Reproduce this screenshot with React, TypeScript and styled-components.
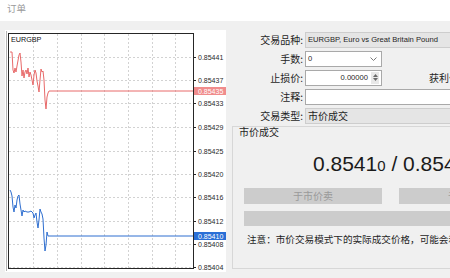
import React from "react";
import styled, { createGlobalStyle } from "styled-components";

const GlobalStyle = createGlobalStyle`
  html, body {
    margin: 0;
    padding: 0;
    background: #f0f0f0;
    overflow: hidden;
  }
  body {
    font-family: "Liberation Sans", "Noto Sans CJK SC", sans-serif;
    color: #1e1e1e;
  }
`;

const cjk = `"Noto Sans CJK SC", "Liberation Sans", sans-serif`;

const Window = styled.div`
  width: 450px;
  height: 278px;
  display: flex;
  flex-direction: column;
  background: #f0f0f0;
  overflow: hidden;
`;

const TitleBar = styled.div`
  height: 21px;
  flex: none;
  background: #ffffff;
  color: #9a9a9a;
  font-family: ${cjk};
  font-size: 9.5px;
  line-height: 17px;
  padding-left: 7px;
  box-sizing: border-box;
`;

const Body = styled.div`
  display: flex;
  padding: 9px 0 0 5px;
  gap: 6px;
  flex: 1;
  min-height: 0;
`;

const ChartPanel = styled.div`
  width: 221px;
  height: 242px;
  flex: none;
  background: #ffffff;
`;

const OrderPanel = styled.div`
  flex: 1;
  min-width: 0;
  display: flex;
  flex-direction: column;
`;

const Form = styled.div`
  display: grid;
  grid-template-columns: 71px 1fr;
  grid-auto-rows: 19px;
  column-gap: 2px;
  align-items: center;
`;

const Label = styled.div`
  font-family: ${cjk};
  font-size: 10px;
  text-align: right;
  color: #1e1e1e;
  white-space: nowrap;
`;

const Field = styled.div<{ $gray?: boolean; $width?: number; $align?: string; $cjk?: boolean }>`
  height: 16px;
  box-sizing: border-box;
  width: ${(p) => (p.$width ? `${p.$width}px` : "calc(100% + 20px)")};
  background: ${(p) => (p.$gray ? "#e5e5e5" : "#ffffff")};
  border: 1px solid ${(p) => (p.$gray ? "#cdcdcd" : "#a9a9a9")};
  font-family: ${(p) => (p.$cjk ? cjk : `"Liberation Sans", sans-serif`)};
  font-size: ${(p) => (p.$cjk ? "10px" : "7.6px")};
  line-height: 14px;
  padding: 0 2px;
  display: flex;
  align-items: center;
  justify-content: ${(p) => p.$align || "flex-start"};
  white-space: nowrap;
  overflow: hidden;
  flex: none;
`;

const FieldRow = styled.div`
  display: flex;
  align-items: center;
`;

const SideLabel = styled(Label)`
  margin-left: 47px;
  text-align: left;
`;

const Chevron = styled.span`
  margin-left: auto;
  margin-right: 2px;
  display: flex;
`;

const Spin = styled.span`
  margin-left: 3px;
  width: 8px;
  height: 12px;
  display: flex;
  flex-direction: column;
  justify-content: center;
  align-items: center;
  gap: 1px;
  background: #e8e8e8;
`;

const GroupBox = styled.div`
  margin-top: 1px;
  height: 143px;
  border: 1px solid #d7d7d7;
  border-right: none;
  box-sizing: border-box;
  margin-right: -20px;
  display: flex;
  flex-direction: column;
`;

const GroupTitle = styled.div`
  font-family: ${cjk};
  font-size: 10px;
  line-height: 10px;
  padding: 0 0 0 6px;
  color: #1e1e1e;
`;

const Price = styled.div`
  font-family: "Liberation Sans", sans-serif;
  font-size: 21px;
  color: #1a1a1a;
  margin: 15px 0 0 80px;
  white-space: nowrap;
  line-height: 24px;
`;

const Small = styled.span`
  font-size: 15px;
`;

const Buttons = styled.div`
  display: flex;
  gap: 17px;
  padding-left: 11px;
  margin-top: 10px;
`;

const Button = styled.div<{ $width: number }>`
  width: ${(p) => p.$width}px;
  height: 16px;
  flex: none;
  background: #cccccc;
  color: #9a9a9a;
  font-family: ${cjk};
  font-size: 10px;
  line-height: 16px;
  text-align: center;
`;

const Bar = styled.div`
  margin: 7px 0 0 11px;
  height: 15px;
  background: #cccccc;
`;

const Note = styled.div`
  margin: 7px 0 0 14px;
  font-family: ${cjk};
  font-size: 9.6px;
  line-height: 12px;
  color: #1e1e1e;
  white-space: nowrap;
`;

const red = [
  [10, 52], [12, 52], [13, 70], [14, 73], [15, 68], [16, 72], [17, 66], [19, 55], [20, 53],
  [21, 62], [22, 76], [23, 70], [24, 78], [25, 72], [26, 70], [27, 74], [28, 68], [29, 77],
  [30, 72], [31, 75], [32, 80], [33, 85], [34, 75], [35, 70], [36, 73], [37, 81], [38, 86],
  [39, 92], [40, 80], [41, 69], [42, 72], [43, 71], [44, 80], [45, 100], [46, 109], [47, 97],
  [48, 93], [49, 91], [193, 91],
];

const blue = [
  [10, 190], [11, 192], [12, 196], [13, 207], [14, 212], [15, 205], [16, 208], [17, 200],
  [18, 196], [19, 195], [20, 204], [21, 210], [22, 216], [23, 210], [24, 212], [25, 211],
  [27, 212], [29, 212], [31, 211], [33, 213], [34, 218], [35, 215], [36, 213], [37, 222],
  [38, 228], [39, 220], [40, 209], [41, 212], [42, 214], [43, 219], [44, 238], [45, 251],
  [46, 245], [47, 232], [48, 236], [49, 236], [193, 236],
];

const gridX = [33, 57, 81, 104, 128, 152, 175];
const levels: [string, number][] = [
  ["0.85441", 57], ["0.85437", 80], ["0.85433", 103], ["0.85429", 127], ["0.85425", 151],
  ["0.85420", 174], ["0.85416", 197], ["0.85412", 221], ["0.85408", 244], ["0.85404", 267],
];

const toPoints = (pts: number[][]) => pts.map(([x, y]) => `${x},${y}`).join(" ");

const Chart = () => (
  <svg width="221" height="242" viewBox="5 30 221 242" style={{ display: "block" }}>
    <g stroke="#d2d2d2" strokeWidth="1" strokeDasharray="2 2">
      {gridX.map((x) => (
        <line key={x} x1={x + 0.5} y1={34} x2={x + 0.5} y2={268} />
      ))}
      {levels.map(([, y]) => (
        <line key={y} x1={9} y1={y + 0.5} x2={193} y2={y + 0.5} />
      ))}
    </g>
    <line x1="6.5" y1="31" x2="6.5" y2="271" stroke="#b4b4b4" />
    <rect x="8.5" y="33.5" width="185" height="235" fill="none" stroke="#262626" />
    <text x="11" y="42" fontSize="7.2" fontFamily="Liberation Sans" fill="#111">EURGBP</text>
    <polyline points={toPoints(red)} fill="none" stroke="#e86a6a" strokeWidth="1" />
    <polyline points={toPoints(blue)} fill="none" stroke="#2f6fd0" strokeWidth="1" />
    <g fontSize="7" fontFamily="Liberation Sans" fill="#2a2a2a">
      {levels.map(([t, y]) => (
        <g key={t}>
          <line x1="193" y1={y + 0.5} x2="196" y2={y + 0.5} stroke="#262626" />
          <text x="198" y={y + 2.5}>{t}</text>
        </g>
      ))}
    </g>
    <rect x="194" y="87" width="32" height="8" fill="#f08c8c" />
    <text x="198" y="93.5" fontSize="7" fontFamily="Liberation Sans" fill="#ffffff">0.85435</text>
    <rect x="194" y="232" width="32" height="8" fill="#2a6fd6" />
    <text x="198" y="238.5" fontSize="7" fontFamily="Liberation Sans" fill="#ffffff">0.85410</text>
  </svg>
);

export default function App() {
  return (
    <Window>
      <GlobalStyle />
      <TitleBar>订单</TitleBar>
      <Body>
        <ChartPanel>
          <Chart />
        </ChartPanel>
        <OrderPanel>
          <Form>
            <Label>交易品种:</Label>
            <Field $gray>EURGBP, Euro vs Great Britain Pound</Field>
            <Label>手数:</Label>
            <Field $width={77}>
              0
              <Chevron>
                <svg width="7" height="4" viewBox="0 0 7 4">
                  <polyline points="0.5,0.5 3.5,3.5 6.5,0.5" fill="none" stroke="#7a7a7a" />
                </svg>
              </Chevron>
            </Field>
            <Label>止损价:</Label>
            <FieldRow>
              <Field $width={77} $align="flex-end">
                0.00000
                <Spin>
                  <svg width="5" height="3" viewBox="0 0 5 3"><polygon points="0,3 2.5,0 5,3" fill="#6a6a6a" /></svg>
                  <svg width="5" height="3" viewBox="0 0 5 3"><polygon points="0,0 2.5,3 5,0" fill="#6a6a6a" /></svg>
                </Spin>
              </Field>
              <SideLabel>获利价:</SideLabel>
            </FieldRow>
            <Label>注释:</Label>
            <Field />
            <Label>交易类型:</Label>
            <Field $gray $cjk>市价成交</Field>
          </Form>
          <GroupBox>
            <GroupTitle>市价成交</GroupTitle>
            <Price>
              0.8541<Small>0</Small> / 0.85435
            </Price>
            <Buttons>
              <Button $width={138}>于市价卖</Button>
              <Button $width={138}>于市价买</Button>
            </Buttons>
            <Bar />
            <Note>注意：市价交易模式下的实际成交价格，可能会和请求价格不同。</Note>
          </GroupBox>
        </OrderPanel>
      </Body>
    </Window>
  );
}
